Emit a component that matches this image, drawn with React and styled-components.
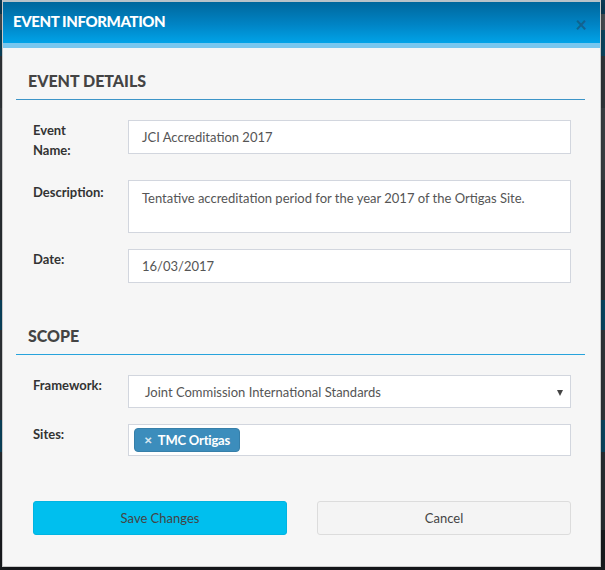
import React from 'react'
import styled, { createGlobalStyle } from 'styled-components'

const GlobalStyle = createGlobalStyle`
	html, body {
		margin: 0;
		padding: 0;
	}
	body {
		width: 605px;
		height: 570px;
		overflow: hidden;
		font-family: Lato, 'Liberation Sans', sans-serif;
		background: linear-gradient(
			to bottom,
			#0c3d5a 0px,
			#0c3d5a 14px,
			#4b5157 14px,
			#4b5157 30px,
			#0b4a66 30px,
			#0b4a66 56px,
			#34393d 56px,
			#34393d 108px,
			#3e4347 108px,
			#3e4347 180px,
			#2d3338 180px,
			#2d3338 300px,
			#0a4a68 300px,
			#0a4a68 330px,
			#33383c 330px,
			#33383c 420px,
			#0b4a66 420px,
			#0b4a66 452px,
			#2b3035 452px,
			#2b3035 530px,
			#1a1d20 530px
		);
	}
`

const Modal = styled.div`
	margin-left: 2px;
	width: 599px;
	height: 567px;
	background: #f6f6f6;
	border-left: 1px solid #c9c9c9;
	border-right: 1px solid #c9c9c9;
	border-bottom: 1px solid #c9c9c9;
	box-sizing: border-box;
	display: flex;
	flex-direction: column;
	box-shadow: 0 2px 8px rgba(0, 0, 0, 0.4);
`

const Header = styled.div`
	height: 41px;
	display: flex;
	align-items: center;
	justify-content: space-between;
	padding: 0 13px 3px 10px;
	box-sizing: border-box;
	background: linear-gradient(to bottom, #00679c 0%, #0084c5 55%, #00a3e8 100%);
	border-bottom: 5px solid #78c7ef;
	border-top: 2px solid #b9c3c9;
	height: 48px;
`

const Title = styled.h4`
	margin: 0;
	color: #fff;
	font-size: 15px;
	font-weight: 900;
	letter-spacing: -0.4px;
`

const Close = styled.span`
	color: #175b83;
	font-size: 20px;
	font-weight: 700;
	line-height: 1;
	margin-top: 6px;
	opacity: 0.8;
`

const Body = styled.div`
	padding: 22px 15px 0 13px;
	display: flex;
	flex-direction: column;
`

const Section = styled.div`
	display: flex;
	flex-direction: column;
	gap: 16px;
	margin-bottom: ${(p) => p.$after || 0}px;
`

const SectionTitle = styled.h3`
	margin: 0 0 20px;
	padding: 0 0 7px 12px;
	font-size: 16px;
	font-weight: 900;
	color: #444;
	line-height: 22px;
	border-bottom: 1px solid ${(p) => p.$line || '#3d95c8'};
`

const Row = styled.div`
	display: grid;
	grid-template-columns: 95px 443px;
	padding-left: 17px;
	align-items: start;
`

const Label = styled.label`
	font-size: 13px;
	font-weight: 700;
	color: #333;
	line-height: 20px;
	padding-top: ${(p) => p.$top || 0}px;
	padding-bottom: ${(p) => p.$bottom || 0}px;
`

const Field = styled.div`
	box-sizing: border-box;
	height: ${(p) => p.$h || 34}px;
	background: #fff;
	border: 1px solid #d2d6de;
	font-size: 13px;
	color: #555;
	display: flex;
	align-items: ${(p) => (p.$multi ? 'flex-start' : 'center')};
	padding: ${(p) => (p.$multi ? '7px 13px' : '0 13px')};
	line-height: 20px;
	position: relative;
`

const SelectText = styled.span`
	padding-left: 3px;
`

const Caret = styled.span`
	position: absolute;
	right: 7px;
	top: 14px;
	width: 0;
	height: 0;
	border-left: 3px solid transparent;
	border-right: 3px solid transparent;
	border-top: 6px solid #444;
`

const TagBox = styled(Field)`
	padding: 0 5px;
`

const Tag = styled.span`
	display: inline-flex;
	align-items: center;
	gap: 6px;
	height: 24px;
	padding: 0 9px 0 9px;
	background: #3c8dbc;
	border: 1px solid #367fa9;
	border-radius: 4px;
	box-sizing: border-box;
	color: #fff;
	font-size: 13px;
	font-weight: 700;
	letter-spacing: -0.2px;
`

const TagX = styled.span`
	font-size: 10px;
	color: rgba(255, 255, 255, 0.8);
`

const Footer = styled.div`
	display: flex;
	gap: 30px;
	padding-left: 17px;
`

const Button = styled.button`
	width: 254px;
	height: 34px;
	border-radius: 3px;
	font-family: inherit;
	font-size: 13px;
	color: #444;
	cursor: pointer;
	background: ${(p) => (p.$primary ? '#00bfee' : '#f4f4f4')};
	border: 1px solid ${(p) => (p.$primary ? '#00b4e2' : '#dcdcdc')};
`

export default function App() {
	return (
		<>
			<GlobalStyle />
			<Modal>
				<Header>
					<Title>EVENT INFORMATION</Title>
					<Close>×</Close>
				</Header>
				<Body>
					<SectionTitle>EVENT DETAILS</SectionTitle>
					<Section $after={42}>
						<Row>
							<Label $bottom={4}>
								Event
								<br />
								Name:
							</Label>
							<Field>JCI Accreditation 2017</Field>
						</Row>
						<Row>
							<Label $top={2}>Description:</Label>
							<Field $h={53} $multi>
								Tentative accreditation period for the year 2017 of the Ortigas Site.
							</Field>
						</Row>
						<Row>
							<Label>Date:</Label>
							<Field>16/03/2017</Field>
						</Row>
					</Section>
					<SectionTitle $line='#27a3dc'>SCOPE</SectionTitle>
					<Section $after={45}>
						<Row>
							<Label>Framework:</Label>
							<Field $h={33}>
								<SelectText>Joint Commission International Standards</SelectText>
								<Caret />
							</Field>
						</Row>
						<Row>
							<Label>Sites:</Label>
							<TagBox $h={32}>
								<Tag>
									<TagX>✕</TagX>TMC Ortigas
								</Tag>
							</TagBox>
						</Row>
					</Section>
					<Footer>
						<Button $primary>Save Changes</Button>
						<Button>Cancel</Button>
					</Footer>
				</Body>
			</Modal>
		</>
	)
}
